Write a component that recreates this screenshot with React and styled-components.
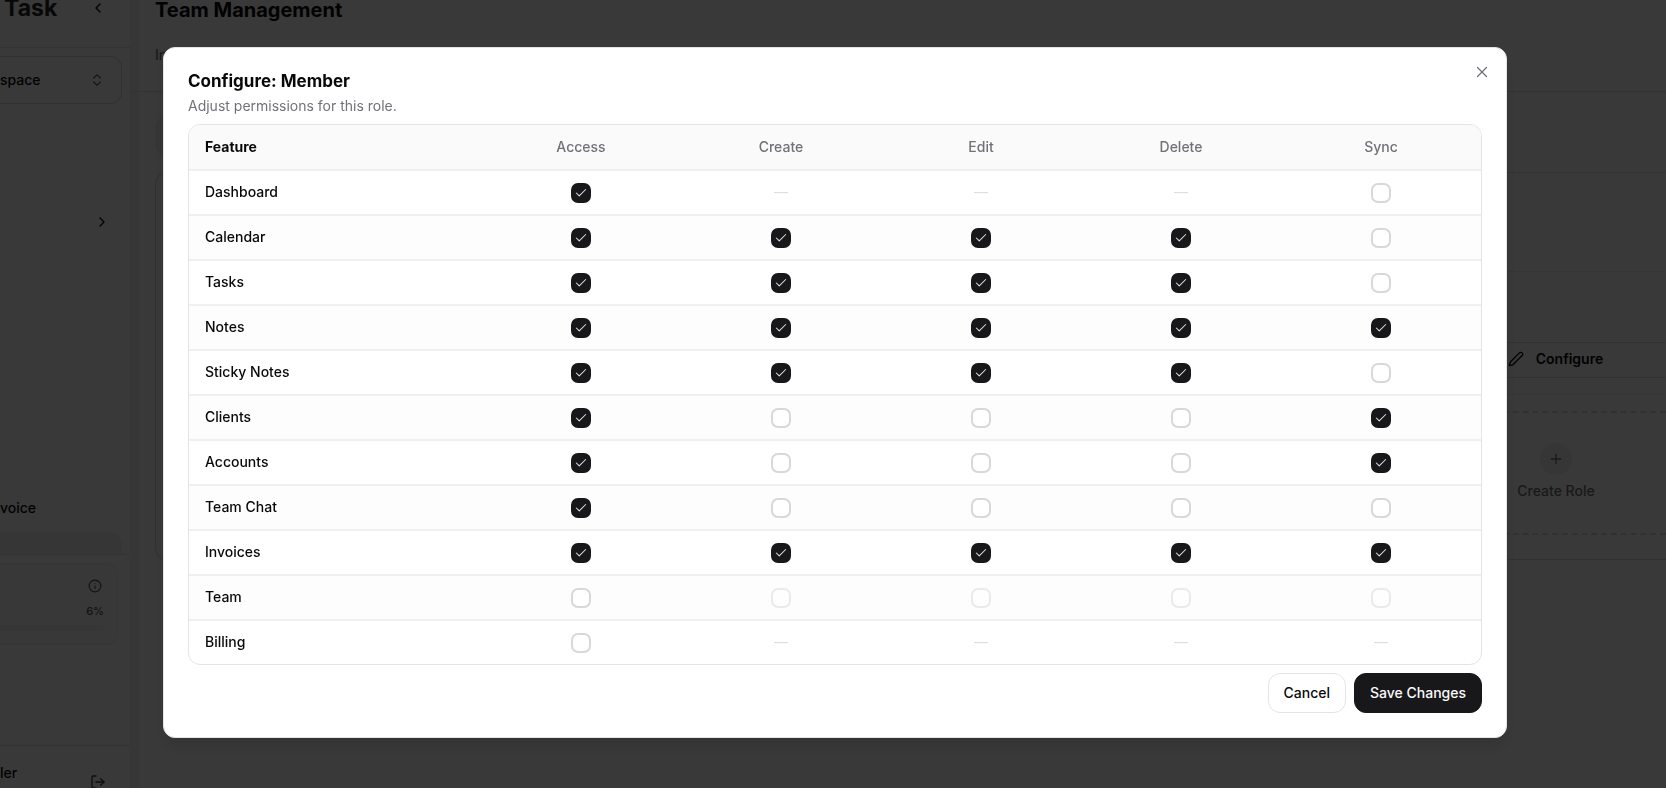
import React, { useState } from 'react';
import styled, { createGlobalStyle } from 'styled-components';
import {
  Check,
  ChevronLeft,
  ChevronRight,
  ChevronsUpDown,
  Info,
  LogOut,
  Pen,
  Plus,
  X,
} from 'lucide-react';

const columns = ['Access', 'Create', 'Edit', 'Delete', 'Sync'];

// 1 = granted, 0 = not granted, null = not available for the feature
const initialPermissions = [
  { feature: 'Dashboard', values: [1, null, null, null, 0] },
  { feature: 'Calendar', values: [1, 1, 1, 1, 0] },
  { feature: 'Tasks', values: [1, 1, 1, 1, 0] },
  { feature: 'Notes', values: [1, 1, 1, 1, 1] },
  { feature: 'Sticky Notes', values: [1, 1, 1, 1, 0] },
  { feature: 'Clients', values: [1, 0, 0, 0, 1] },
  { feature: 'Accounts', values: [1, 0, 0, 0, 1] },
  { feature: 'Team Chat', values: [1, 0, 0, 0, 0] },
  { feature: 'Invoices', values: [1, 1, 1, 1, 1] },
  { feature: 'Team', values: [0, 0, 0, 0, 0] },
  { feature: 'Billing', values: [0, null, null, null, null] },
];

function PermissionCheckbox({ label, checked, disabled, onChange }) {
  return (
    <CheckboxWrap>
      <CheckboxInput
        type="checkbox"
        aria-label={label}
        checked={checked}
        disabled={disabled}
        onChange={onChange}
      />
      {checked && <CheckMark size={14} strokeWidth={1.75} />}
    </CheckboxWrap>
  );
}

function PermissionsTable() {
  const [permissions, setPermissions] = useState(initialPermissions);

  const toggle = (rowIndex, colIndex) => {
    setPermissions((rows) =>
      rows.map((row, r) =>
        r !== rowIndex
          ? row
          : { ...row, values: row.values.map((v, c) => (c === colIndex ? 1 - v : v)) }
      )
    );
  };

  return (
    <TableFrame>
      <Table>
        <thead>
          <tr>
            <HeadCell scope="col" $feature>Feature</HeadCell>
            {columns.map((column) => (
              <HeadCell key={column} scope="col">{column}</HeadCell>
            ))}
          </tr>
        </thead>
        <tbody>
          {permissions.map(({ feature, values }, r) => (
            <Row key={feature}>
              <FeatureCell scope="row">{feature}</FeatureCell>
              {values.map((value, c) => (
                <Cell key={columns[c]}>
                  {value === null ? (
                    <Dash>—</Dash>
                  ) : (
                    <PermissionCheckbox
                      label={`${feature} ${columns[c]}`}
                      checked={value === 1}
                      disabled={c > 0 && feature === 'Team' && !values[0]}
                      onChange={() => toggle(r, c)}
                    />
                  )}
                </Cell>
              ))}
            </Row>
          ))}
        </tbody>
      </Table>
    </TableFrame>
  );
}

function App() {
  return (
    <>
      <GlobalStyle />
      <Page>
        <Sidebar>
          <Brand>
            <BrandName>Task</BrandName>
            <IconButton aria-label="Collapse sidebar"><ChevronLeft size={16} /></IconButton>
          </Brand>
          <Workspace>
            <span>space</span>
            <ChevronsUpDown size={16} color="#71717a" />
          </Workspace>
          <Nav>
            <IconButton aria-label="Expand"><ChevronRight size={16} /></IconButton>
            <NavLink href="#invoice">voice</NavLink>
            <ActiveItem />
          </Nav>
          <Usage>
            <UsageCard>
              <Info size={14} />
              <span>6%</span>
              <UsageBar />
            </UsageCard>
          </Usage>
          <Account>
            <span>ler</span>
            <IconButton aria-label="Log out"><LogOut size={16} color="#3f3f46" /></IconButton>
          </Account>
        </Sidebar>
        <Main>
          <MainHeader>
            <PageTitle>Team Management</PageTitle>
            <Tab href="#info">In</Tab>
          </MainHeader>
          <Content>
            <TabStrip />
            <Panel>
              <PanelHeader />
              <RoleCard>
                <ConfigureButton>
                  <Pen size={16} />
                  Configure
                </ConfigureButton>
              </RoleCard>
              <CreateRole>
                <PlusCircle><Plus size={16} /></PlusCircle>
                Create Role
              </CreateRole>
            </Panel>
          </Content>
        </Main>
      </Page>
      <Overlay>
        <Dialog role="dialog" aria-modal="true" aria-labelledby="dialog-title">
          <DialogTitle id="dialog-title">Configure: Member</DialogTitle>
          <DialogDescription>Adjust permissions for this role.</DialogDescription>
          <PermissionsTable />
          <DialogFooter>
            <Button>Cancel</Button>
            <Button $primary>Save Changes</Button>
          </DialogFooter>
          <CloseButton aria-label="Close"><X size={18} strokeWidth={1.75} /></CloseButton>
        </Dialog>
      </Overlay>
    </>
  );
}

const GlobalStyle = createGlobalStyle`
  *, *::before, *::after {
    box-sizing: border-box;
  }

  body {
    margin: 0;
    overflow: hidden;
    font-family: Inter, sans-serif;
    font-size: 14px;
    line-height: 20px;
    color: #09090b;
  }

  button {
    font: inherit;
    color: inherit;
    cursor: pointer;
  }

  a {
    color: inherit;
    text-decoration: none;
  }
`;

const Page = styled.div`
  display: flex;
  height: 100vh;
  overflow: hidden;
`;

const Sidebar = styled.aside`
  display: flex;
  flex-direction: column;
  width: 130px;
  background: #fff;
  font-weight: 500;
`;

const IconButton = styled.button`
  display: flex;
  padding: 0;
  border: 0;
  background: none;
`;

const Brand = styled.div`
  display: flex;
  justify-content: space-between;
  height: 48px;
  padding: 0 24px 0 4px;
  border-bottom: 1px solid #e4e4e7;
`;

const BrandName = styled.span`
  margin-top: -8px;
  font-size: 23px;
  line-height: 32px;
  font-weight: 700;
  color: #27272a;
`;

const Workspace = styled.div`
  display: flex;
  align-items: center;
  justify-content: space-between;
  height: 48px;
  margin: 8px 8px 0 0;
  padding-right: 16px;
  border: 1px solid #d9d9dc;
  border-left: 0;
  border-radius: 0 12px 12px 0;
`;

const Nav = styled.nav`
  display: flex;
  flex-direction: column;
  flex: 1;
  padding-top: 110px;
  border-bottom: 1px solid #e4e4e7;

  ${IconButton} {
    align-self: flex-end;
    margin-right: 20px;
  }
`;

const NavLink = styled.a`
  margin-top: auto;
`;

const ActiveItem = styled.div`
  height: 22px;
  margin: 14px 8px 0 0;
  border-radius: 0 12px 0 0;
  background: #f0f0f0;
`;

const Usage = styled.div`
  height: 191px;
  padding: 8px 12px 0 0;
  border-bottom: 1px solid #e4e4e7;
`;

const UsageCard = styled.div`
  display: flex;
  flex-direction: column;
  align-items: flex-end;
  height: 82px;
  padding: 15px 13px 0 0;
  border: 1px solid #eeeef0;
  border-left: 0;
  border-radius: 0 12px 12px 0;
  background: #fbfbfb;
  color: #52525b;
  font-size: 11px;

  svg {
    margin-right: 2px;
  }

  span {
    margin-top: 8px;
  }
`;

const UsageBar = styled.div`
  width: 100%;
  height: 6px;
  margin-top: 4px;
  border-radius: 0 4px 4px 0;
  background: #f0f0f0;
`;

const Account = styled.div`
  display: flex;
  align-items: flex-start;
  justify-content: space-between;
  height: 42px;
  padding: 17px 24px 0 0;

  ${IconButton} {
    margin-top: 11px;
  }
`;

const Main = styled.main`
  flex: 1;
  background: linear-gradient(to right, #f0f0f0 9px, #fcfcfc 9px);
`;

const MainHeader = styled.header`
  display: flex;
  flex-direction: column;
  height: 92px;
  padding-left: 25px;
  border-bottom: 1px solid #e4e4e7;
`;

const PageTitle = styled.h1`
  margin: 0;
  font-size: 20px;
  line-height: 20px;
  font-weight: 700;
`;

const Tab = styled.a`
  margin-top: 25px;
  font-weight: 500;
  color: #71717a;
`;

const Content = styled.div`
  padding: 24px 0 0 25px;
`;

const TabStrip = styled.div`
  width: 400px;
  height: 40px;
  border-radius: 12px;
  background: #f0f0f0;
`;

const Panel = styled.section`
  display: flex;
  flex-direction: column;
  align-items: flex-end;
  height: 388px;
  margin-top: 16px;
  border: 1px solid #dcdce0;
  border-right: 0;
  border-radius: 12px 0 0 12px;
`;

const PanelHeader = styled.div`
  width: 100%;
  height: 98px;
`;

const RoleCard = styled.div`
  display: flex;
  align-items: flex-end;
  width: 222px;
  height: 124px;
  padding-bottom: 16px;
  border: 1px solid #ececee;
  border-width: 1px 0;
`;

const ConfigureButton = styled.button`
  display: flex;
  align-items: center;
  justify-content: center;
  gap: 12px;
  width: 100%;
  height: 36px;
  padding: 0 0 2px;
  border: 1px solid #dcdce0;
  border-right: 0;
  background: none;
  font-weight: 600;
`;

const CreateRole = styled.button`
  display: flex;
  flex-direction: column;
  align-items: center;
  width: 222px;
  height: 124px;
  margin-top: 16px;
  padding: 30px 0 0;
  border: 2px dashed #dcdce0;
  border-right: 0;
  background: none;
  font-weight: 500;
  color: #71717a;
`;

const PlusCircle = styled.span`
  display: flex;
  align-items: center;
  justify-content: center;
  width: 32px;
  height: 32px;
  margin-bottom: 6px;
  border-radius: 50%;
  background: #f0f0f0;
`;

const Overlay = styled.div`
  position: fixed;
  inset: 0;
  display: flex;
  align-items: flex-start;
  padding: 47px 159px 0 163px;
  background: rgba(0, 0, 0, 0.775);
`;

const Dialog = styled.div`
  position: relative;
  display: flex;
  flex: 1;
  flex-direction: column;
  padding: 24px;
  border: 1px solid #e4e4e7;
  border-radius: 12px;
  background: #fff;
  box-shadow: 0 10px 15px rgba(0, 0, 0, 0.1);
`;

const DialogTitle = styled.h2`
  margin: 0 0 6px;
  font-size: 17px;
  line-height: 18px;
  font-weight: 700;
`;

const DialogDescription = styled.p`
  margin: 0 0 8px;
  color: #71717a;
`;

const TableFrame = styled.div`
  overflow: hidden;
  border: 1px solid #e4e4e7;
  border-radius: 12px;
`;

const Table = styled.table`
  width: 100%;
  table-layout: fixed;
  border-collapse: separate;
  border-spacing: 0;
`;

const HeadCell = styled.th`
  width: ${({ $feature }) => ($feature ? 'auto' : '200px')};
  height: 46px;
  padding: ${({ $feature }) => ($feature ? '0 16px' : '0')};
  border-bottom: 2px solid #f0f0f0;
  background: #fafafa;
  color: ${({ $feature }) => ($feature ? '#09090b' : '#71717a')};
  font-weight: ${({ $feature }) => ($feature ? 700 : 500)};
  text-align: ${({ $feature }) => ($feature ? 'left' : 'center')};
`;

const FeatureCell = styled.th`
  height: 45px;
  padding: 0 16px 2px;
  border-bottom: 2px solid #f0f0f0;
  font-weight: 500;
  text-align: left;
`;

const Cell = styled.td`
  padding: 0;
  border-bottom: 2px solid #f0f0f0;
  text-align: center;
`;

const Row = styled.tr`
  &:nth-child(even) {
    background: #fdfdfd;
  }

  &:last-child > * {
    height: 43px;
    border-bottom: 0;
  }
`;

const Dash = styled.span`
  display: block;
  padding-bottom: 2px;
  color: #dedee0;
`;

const CheckboxWrap = styled.span`
  position: relative;
  display: flex;
  width: 20px;
  margin: 0 auto;
`;

const CheckboxInput = styled.input`
  appearance: none;
  width: 20px;
  height: 20px;
  margin: 0;
  border: 2px solid #d8d8d9;
  border-radius: 7px;
  background: #fff;
  cursor: pointer;

  &:checked {
    border-color: #18181b;
    background: #18181b;
  }

  &:disabled {
    opacity: 0.5;
    cursor: default;
  }
`;

const CheckMark = styled(Check)`
  position: absolute;
  top: 3px;
  left: 3px;
  color: #e4e4e7;
  pointer-events: none;
`;

const DialogFooter = styled.div`
  display: flex;
  justify-content: flex-end;
  gap: 8px;
  margin-top: 8px;
`;

const Button = styled.button`
  height: 40px;
  padding: 0 15px;
  border: 1px solid ${({ $primary }) => ($primary ? '#18181b' : '#e4e4e7')};
  border-radius: 12px;
  background: ${({ $primary }) => ($primary ? '#18181b' : '#fff')};
  color: ${({ $primary }) => ($primary ? '#fafafa' : '#09090b')};
  font-weight: 500;
`;

const CloseButton = styled.button`
  position: absolute;
  top: 15px;
  right: 15px;
  display: flex;
  padding: 0;
  border: 0;
  background: none;
  color: #71717a;
`;

export default App;
